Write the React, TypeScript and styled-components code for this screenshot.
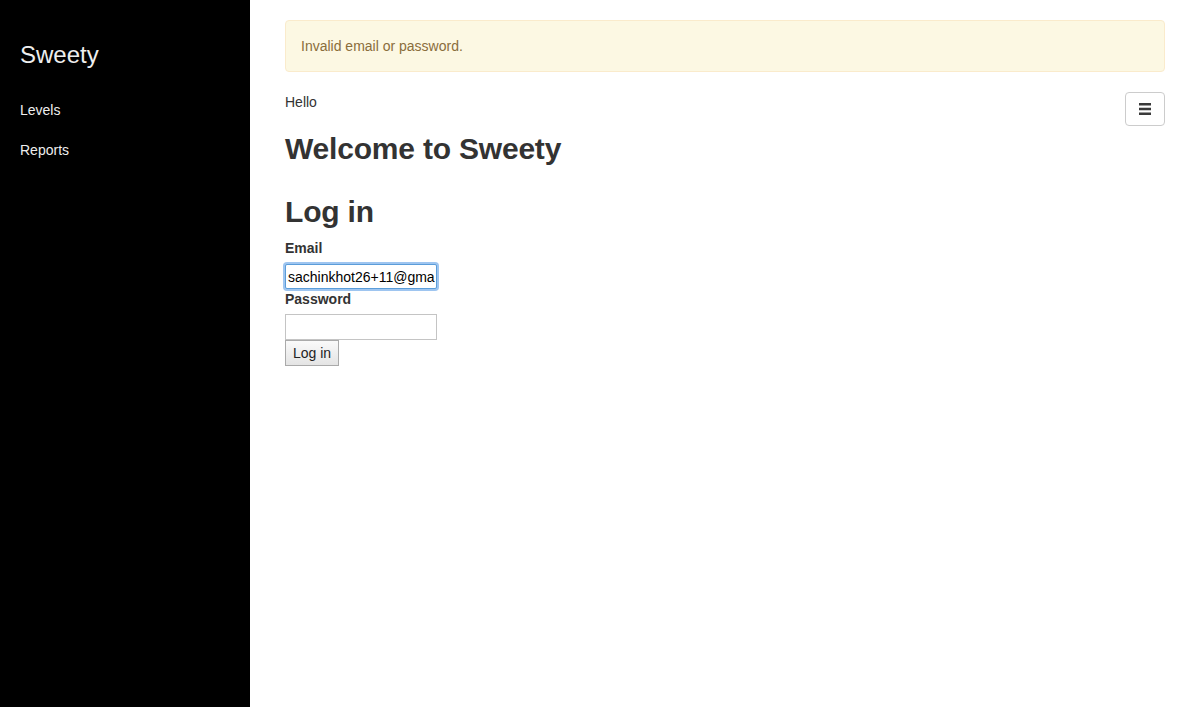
import React from "react";
import styled, { createGlobalStyle } from "styled-components";

const GlobalStyle = createGlobalStyle`
  html, body { margin: 0; padding: 0; }
  body {
    font-family: "Liberation Sans", Arial, Helvetica, sans-serif;
    font-size: 14px;
    line-height: 20px;
    color: #333;
    background: #fff;
  }
  * { box-sizing: border-box; }
`;

const Layout = styled.div`
  display: flex;
  min-height: 100vh;
`;

const Sidebar = styled.nav`
  width: 250px;
  flex: 0 0 250px;
  background: #000;
  padding: 40px 20px 0 20px;
`;

const Brand = styled.div`
  font-size: 24px;
  line-height: 30px;
  color: #eee;
  margin-bottom: 30px;
`;

const NavList = styled.ul`
  list-style: none;
  margin: 0;
  padding: 0;
  display: flex;
  flex-direction: column;
  gap: 20px;
`;

const NavLink = styled.a`
  color: #eee;
  font-size: 14px;
  line-height: 20px;
  text-decoration: none;
  display: block;
`;

const Main = styled.main`
  flex: 1;
  padding: 20px 35px;
  display: flex;
  flex-direction: column;
`;

const Alert = styled.div`
  background: #fcf8e3;
  border: 1px solid #faebcc;
  color: #8a6d3b;
  border-radius: 4px;
  padding: 15px;
  margin-bottom: 20px;
`;

const TopRow = styled.div`
  display: flex;
  justify-content: space-between;
  align-items: flex-start;
  height: 20px;
`;

const MenuButton = styled.button`
  width: 40px;
  height: 34px;
  margin-top: 0;
  border: 1px solid #ccc;
  border-radius: 4px;
  background: #fff;
  display: flex;
  align-items: center;
  justify-content: center;
  padding: 0;
  position: relative;
  z-index: 1;
`;

const Heading = styled.h2`
  font-size: 30px;
  font-weight: 700;
  line-height: 33px;
  margin: 20px 0 10px;
  color: #333;
  letter-spacing: -0.2px;
`;

const Form = styled.form`
  display: flex;
  flex-direction: column;
  align-items: flex-start;
`;

const Label = styled.label`
  font-weight: 700;
  font-size: 14px;
  line-height: 20px;
  margin-bottom: 5px;
`;

const Input = styled.input<{ $focused?: boolean }>`
  width: 152px;
  height: ${(p) => (p.$focused ? "25px" : "26px")};
  border: 1px solid ${(p) => (p.$focused ? "#5b9dd9" : "#c4c4c4")};
  border-radius: ${(p) => (p.$focused ? "2px" : "0")};
  box-shadow: ${(p) => (p.$focused ? "0 0 0 2px #9ec5f0" : "none")};
  padding: 1px 1px 1px 2px;
  font-family: "Liberation Sans", Arial, sans-serif;
  font-size: 14px;
  color: #000;
  outline: none;
  margin: ${(p) => (p.$focused ? "1px 0 0" : "0")};
`;

const SubmitButton = styled.button`
  height: 26px;
  padding: 0 7px;
  font-family: "Liberation Sans", Arial, sans-serif;
  font-size: 14px;
  color: #222;
  border: 1px solid #aaa;
  border-radius: 0;
  background: linear-gradient(#fafafa, #e4e4e4);
`;

export default function App() {
  return (
    <>
      <GlobalStyle />
      <Layout>
        <Sidebar>
          <Brand>Sweety</Brand>
          <NavList>
            <li><NavLink href="#">Levels</NavLink></li>
            <li><NavLink href="#">Reports</NavLink></li>
          </NavList>
        </Sidebar>
        <Main>
          <Alert>Invalid email or password.</Alert>
          <TopRow>
            <span>Hello</span>
            <MenuButton aria-label="menu">
              <svg width="12" height="12" viewBox="0 0 12 12">
                <rect x="0" y="0" width="12" height="2.5" fill="#3a3a3a" />
                <rect x="0" y="4.75" width="12" height="2.5" fill="#3a3a3a" />
                <rect x="0" y="9.5" width="12" height="2.5" fill="#3a3a3a" />
              </svg>
            </MenuButton>
          </TopRow>
          <Heading>Welcome to Sweety</Heading>
          <Heading>Log in</Heading>
          <Form onSubmit={(e) => e.preventDefault()}>
            <Label htmlFor="email">Email</Label>
            <Input id="email" $focused defaultValue="sachinkhot26+11@gmail.com" />
            <Label htmlFor="password">Password</Label>
            <Input id="password" type="password" />
            <SubmitButton type="submit">Log in</SubmitButton>
          </Form>
        </Main>
      </Layout>
    </>
  );
}
